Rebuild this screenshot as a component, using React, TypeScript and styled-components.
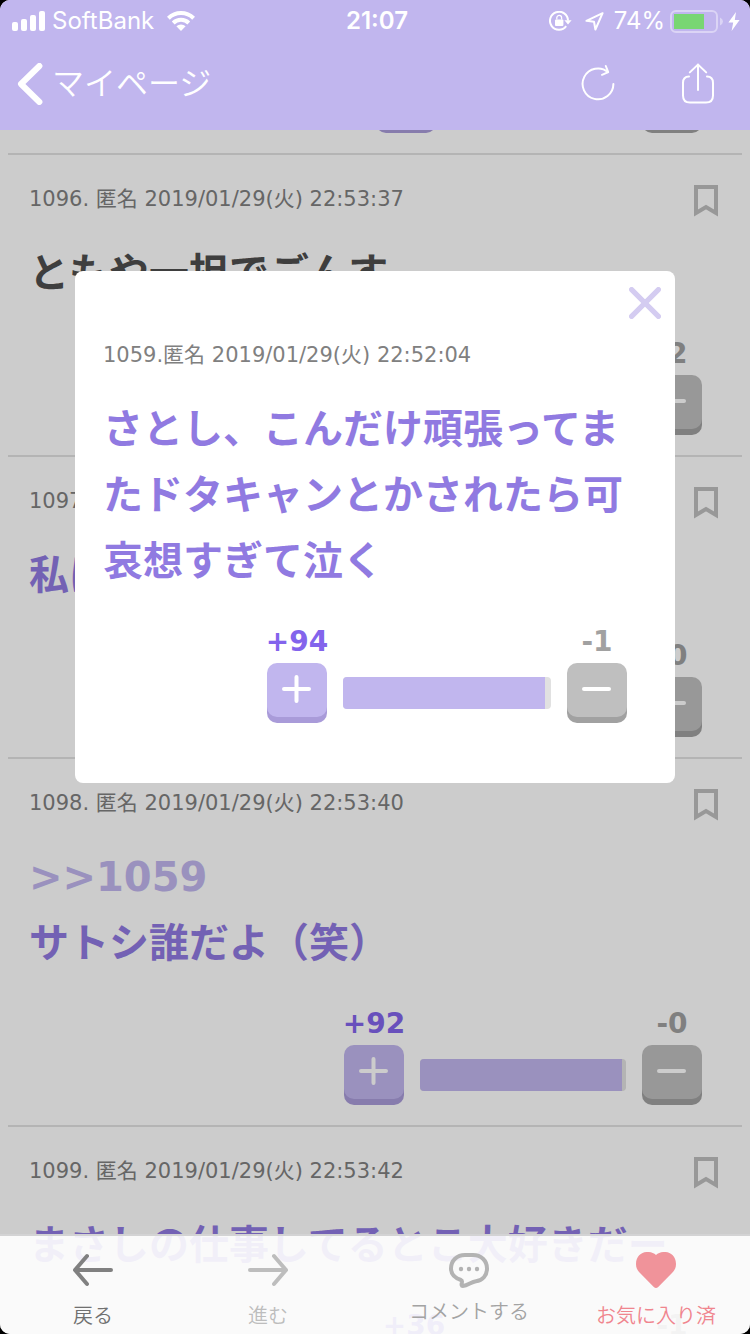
import React from "react";
import styled, { createGlobalStyle } from "styled-components";

const Global = createGlobalStyle`
  *, *::before, *::after { box-sizing: border-box; }
  html, body { margin: 0; background: #000; }
  body { font-family: "DejaVu Sans", "Noto Sans CJK JP", sans-serif; }
  button { font: inherit; color: inherit; border: 0; padding: 0; background: none; cursor: pointer; }
  h1, p, ul { margin: 0; padding: 0; }
  svg { display: block; flex: none; }
`;

const Shell = styled.div`
  display: flex;
  flex-direction: column;
  height: 100vh;
  border-radius: 10px;
  overflow: hidden;
  position: relative;
  background: #fff;
`;

const Header = styled.header`
  flex: none;
  background: #c1b6ee;
  color: #fff;
`;

const StatusBar = styled.div`
  display: grid;
  grid-template-columns: 1fr auto 1fr;
  align-items: center;
  height: 40px;
  padding: 2px 8px 0 12px;
  font-family: Inter, sans-serif;
  font-size: 24px;
  line-height: 28px;
`;

const StatusGroup = styled.div<{ $end?: boolean }>`
  display: flex;
  align-items: center;
  justify-content: ${(p) => (p.$end ? "flex-end" : "flex-start")};
  gap: ${(p) => (p.$end ? 5 : 7)}px;
  padding-right: 2px;
`;

const IconPair = styled.span`
  display: flex;
  align-items: center;
  gap: 13px;
  padding-right: 5px;
`;

const Carrier = styled.span`
  padding-right: 6px;
`;

const Clock = styled.time`
  font-weight: 600;
`;

const NavBar = styled.nav`
  display: flex;
  align-items: center;
  justify-content: space-between;
  height: 90px;
  padding: 0 34px 2px 16px;
`;

const BackLink = styled.a`
  display: flex;
  align-items: center;
  gap: 8px;
  color: #fff;
  text-decoration: none;
  font-family: "Noto Sans CJK JP", sans-serif;
  font-weight: 350;
  font-size: 32px;
  line-height: 40px;
`;

const BackLabel = styled.span`
  padding-bottom: 6px;
`;

const NavActions = styled.div`
  display: flex;
  gap: 64px;
`;

const Main = styled.main`
  flex: 1;
  min-height: 0;
  position: relative;
  overflow: hidden;
`;

const PostList = styled.ul`
  list-style: none;
  padding: 0 8px;
`;

const ScrolledPost = styled.li`
  display: flex;
  align-items: flex-end;
  justify-content: flex-end;
  height: 23px;
  padding: 0 40px 20px 0;
  overflow: hidden;
`;

const Post = styled.li`
  border-top: 2px solid #e1e1e1;
  padding: 30px 40px 20px 21px;
`;

const PostHead = styled.div`
  display: flex;
  justify-content: space-between;
  height: 28px;
  margin-right: -16px;
`;

const Meta = styled.p`
  font-size: 21px;
  line-height: 28px;
  color: #808080;
  white-space: nowrap;
`;

const Body = styled.p<{ $tone: "plain" | "popular" }>`
  margin-top: 27px;
  font-size: 40px;
  line-height: 66px;
  font-weight: 700;
  color: ${(p) => (p.$tone === "plain" ? "#4e4e4e" : "#907ae1")};
`;

const Anchor = styled.a`
  display: block;
  color: #c1b6ee;
  text-decoration: none;
`;

const VoteRow = styled.div`
  display: flex;
  justify-content: flex-end;
  align-items: flex-end;
  gap: 16px;
  margin-top: 34px;
`;

const VoteCell = styled.div`
  display: flex;
  flex-direction: column;
  align-items: center;
  width: 60px;
`;

const Count = styled.span<{ $kind: "plus" | "minus" }>`
  margin-bottom: 7px;
  font-size: 28px;
  line-height: 28px;
  font-weight: 700;
  white-space: nowrap;
  color: ${(p) => (p.$kind === "plus" ? "#8364ec" : "#a1a1a1")};
`;

const VoteButton = styled.button<{ $kind: "plus" | "minus" }>`
  display: flex;
  align-items: center;
  justify-content: center;
  width: 60px;
  height: 54px;
  margin-bottom: 6px;
  border-radius: 10px;
  background: ${(p) => (p.$kind === "plus" ? "#c1b6ee" : "#bfbfbf")};
  box-shadow: 0 6px ${(p) => (p.$kind === "plus" ? "#a99bd9" : "#a1a1a1")};
`;

const Track = styled.div<{ $width: number }>`
  width: ${(p) => p.$width}px;
  height: 32px;
  margin-bottom: 14px;
  border-radius: 4px;
  overflow: hidden;
  background: #e1e1e1;
`;

const Fill = styled.div<{ $rest: number }>`
  height: 100%;
  margin-right: ${(p) => p.$rest}px;
  background: #c1b6ee;
`;

const Overlay = styled.div`
  position: absolute;
  inset: 0;
  display: flex;
  justify-content: center;
  align-items: flex-start;
  padding-top: 141px;
  background: rgba(0, 0, 0, 0.2);
`;

const Dialog = styled.section`
  width: 80%;
  background: #fff;
  border-radius: 8px;
`;

const DialogTop = styled.div`
  display: flex;
  justify-content: flex-end;
  padding: 16px 14px 0;
`;

const DialogContent = styled.div`
  padding: 22px 48px 60px 28px;
`;

const TabBar = styled.nav`
  position: absolute;
  left: 0;
  right: 0;
  bottom: 0;
  display: grid;
  grid-template-columns: 186fr 164fr 238fr 136fr;
  height: 100px;
  padding: 16px 26px 0 0;
  border-top: 2px solid #d3d3d4;
  background: rgba(255, 255, 255, 0.9);
`;

const Tab = styled.button<{ $color: string; $gap?: number }>`
  display: flex;
  flex-direction: column;
  align-items: center;
  justify-content: flex-start;
  gap: ${(p) => p.$gap ?? 15}px;
  font-family: "Noto Sans CJK JP", sans-serif;
  font-weight: 350;
  font-size: 20px;
  line-height: 24px;
  white-space: nowrap;
  color: ${(p) => p.$color};
`;

const SignalIcon = () => (
  <svg width="33" height="20" viewBox="0 0 33 20" fill="#fff" aria-hidden="true">
    <rect x="0" y="11" width="6" height="9" rx="2" />
    <rect x="9" y="8" width="6" height="12" rx="2" />
    <rect x="18" y="4" width="6" height="16" rx="2" />
    <rect x="27" y="0" width="6" height="20" rx="2" />
  </svg>
);

const WifiIcon = () => (
  <svg width="28" height="20" viewBox="0 0 28 20" aria-hidden="true">
    <g fill="none" stroke="#fff" strokeWidth="4">
      <path d="M1.4 7.2a18 18 0 0 1 25.2 0" />
      <path d="M6.2 12a11.2 11.2 0 0 1 15.6 0" />
    </g>
    <path d="M14 20l-4.6-4.7a6.6 6.6 0 0 1 9.2 0z" fill="#fff" />
  </svg>
);

const LockIcon = () => (
  <svg width="23" height="20" viewBox="0 0 23 20" aria-hidden="true">
    <path d="M17.2 15.2A9 9 0 1 1 19 9.6" fill="none" stroke="#fff" strokeWidth="2" />
    <path d="M15.4 9.2h7.2L19 13.4z" fill="#fff" />
    <rect x="6" y="8.4" width="8.4" height="6.6" rx="1" fill="#fff" />
    <path d="M7.8 8.6V6.8a2.4 2.4 0 0 1 4.8 0v1.8" fill="none" stroke="#fff" strokeWidth="1.3" />
  </svg>
);

const LocationIcon = () => (
  <svg width="19" height="19" viewBox="0 0 19 19" aria-hidden="true">
    <path d="M17.6 1.2L1.4 8.8l7.6.9 1.4 7.8z" fill="none" stroke="#fff" strokeWidth="2" strokeLinejoin="round" />
  </svg>
);

const BatteryIcon = () => (
  <svg width="53" height="23" viewBox="0 0 53 23" aria-hidden="true">
    <rect x="1" y="1" width="46" height="21" rx="5" fill="none" stroke="#fff" strokeOpacity=".42" strokeWidth="2" />
    <rect x="4" y="4" width="30" height="15" fill="#79d673" />
    <path d="M50 7.5q3 1.6 3 4t-3 4z" fill="#fff" fillOpacity=".42" />
  </svg>
);

const BoltIcon = () => (
  <svg width="12" height="19" viewBox="0 0 12 19" aria-hidden="true">
    <path d="M8 0L.4 10.6h4.8L3.6 19 11.6 8H6.8z" fill="#fff" />
  </svg>
);

const ChevronIcon = () => (
  <svg width="28" height="42" viewBox="0 0 28 42" aria-hidden="true">
    <path d="M23.4 3L5 21l18.4 18" fill="none" stroke="#fff" strokeWidth="6" strokeLinecap="round" strokeLinejoin="round" />
  </svg>
);

const ReloadIcon = () => (
  <svg width="36" height="42" viewBox="0 0 36 42" aria-hidden="true">
    <g fill="none" stroke="#fff" strokeWidth="2" strokeLinecap="round" strokeLinejoin="round">
      <path d="M33.4 21A15.4 15.4 0 1 1 28 9.2" />
      <path d="M25.8 3l2.4 6.2-6.2 2.6" />
    </g>
  </svg>
);

const ShareIcon = () => (
  <svg width="36" height="42" viewBox="0 0 36 42" aria-hidden="true">
    <g fill="none" stroke="#fff" strokeWidth="2" strokeLinecap="round">
      <path d="M9 13.5Q3 13.5 3 20v12.5q0 7 7 7h16q7 0 7-7V20q0-6.5-6-6.5" />
      <path d="M18 1.6V27M9.8 9.4L18 1.6l8.2 7.8" />
    </g>
  </svg>
);

const BookmarkIcon = () => (
  <svg width="24" height="32" viewBox="0 0 24 32" aria-hidden="true">
    <path d="M2 2h20v26l-10-6-10 6z" fill="none" stroke="#bfbfbf" strokeWidth="4" />
  </svg>
);

const SignIcon = ({ plus }: { plus?: boolean }) => (
  <svg width="30" height="30" viewBox="0 0 30 30" aria-hidden="true">
    <path d={plus ? "M2 14h25M14.5 2v24" : "M2 14h25"} stroke="#fff" strokeWidth="4" strokeLinecap="round" />
  </svg>
);

const CloseIcon = () => (
  <svg width="32" height="32" viewBox="0 0 32 32" aria-hidden="true">
    <path d="M2.6 2.6l26.8 26.8M29.4 2.6L2.6 29.4" stroke="#d4ccf1" strokeWidth="5.2" strokeLinecap="round" />
  </svg>
);

const ArrowIcon = ({ forward }: { forward?: boolean }) => (
  <svg width="40" height="36" viewBox="0 0 40 36" aria-hidden="true">
    <path
      d={forward ? "M2 18h36M26 4l12 14-12 14" : "M38 18H2M14 4L2 18l12 14"}
      fill="none"
      stroke={forward ? "#bdbdbd" : "#808080"}
      strokeWidth="4"
      strokeLinecap="round"
      strokeLinejoin="round"
    />
  </svg>
);

const CommentIcon = () => (
  <svg width="40" height="36" viewBox="0 0 40 36" aria-hidden="true">
    <path
      d="M16 3h8c8 0 14 5.6 14 13.5 0 7-4.5 12-11 12.700-5 .6-8 4.600-13.200 4.800-1.400 0-1.400-1.600-1-3 .3-1.400.6-2.400-.8-3C6 26 2 22.500 2 16.500 2 8.600 8 3 16 3z"
      fill="none"
      stroke="#b3b3b3"
      strokeWidth="4"
      strokeLinejoin="round"
    />
    <g fill="#b3b3b3">
      <circle cx="12" cy="17" r="2.2" />
      <circle cx="20" cy="17" r="2.2" />
      <circle cx="28" cy="17" r="2.2" />
    </g>
  </svg>
);

const HeartIcon = () => (
  <svg width="40" height="36" viewBox="0 0 40 36" aria-hidden="true">
    <path d="M20 3C14-2.600 0-1 0 12c0 4 1.500 6.500 4 9l13.800 14q2.200 2 4.400 0L36 21c2.500-2.500 4-5 4-9C40-1 26-2.600 20 3z" fill="#f0939a" />
  </svg>
);

type VoteData = { plus?: string; minus?: string; bar: number; rest: number };

const Votes = ({ plus, minus, bar, rest }: VoteData) => (
  <VoteRow>
    <VoteCell>
      {plus && <Count $kind="plus">{plus}</Count>}
      <VoteButton $kind="plus" type="button" aria-label="プラス">
        <SignIcon plus />
      </VoteButton>
    </VoteCell>
    <Track $width={bar}>
      <Fill $rest={rest} />
    </Track>
    <VoteCell>
      {minus && <Count $kind="minus">{minus}</Count>}
      <VoteButton $kind="minus" type="button" aria-label="マイナス">
        <SignIcon />
      </VoteButton>
    </VoteCell>
  </VoteRow>
);

type PostData = {
  meta: string;
  text: string;
  tone: "plain" | "popular";
  reply?: string;
  votes: VoteData;
};

const posts: PostData[] = [
  {
    meta: "1096. 匿名 2019/01/29(火) 22:53:37",
    text: "ともや一担でごんす",
    tone: "plain",
    votes: { minus: "-2", bar: 206, rest: 8 },
  },
  {
    meta: "1097. 匿名",
    text: "私は",
    tone: "popular",
    votes: { minus: "-0", bar: 206, rest: 4 },
  },
  {
    meta: "1098. 匿名 2019/01/29(火) 22:53:40",
    text: "サトシ誰だよ（笑）",
    tone: "popular",
    reply: ">>1059",
    votes: { plus: "+92", minus: "-0", bar: 206, rest: 4 },
  },
  {
    meta: "1099. 匿名 2019/01/29(火) 22:53:42",
    text: "まさしの仕事してるとこ大好きだー",
    tone: "popular",
    votes: { plus: "+36", minus: "-1", bar: 166, rest: 6 },
  },
];

export default function App() {
  return (
    <>
      <Global />
      <Shell>
        <Header>
          <StatusBar>
            <StatusGroup>
              <SignalIcon />
              <Carrier>SoftBank</Carrier>
              <WifiIcon />
            </StatusGroup>
            <Clock>21:07</Clock>
            <StatusGroup $end>
              <IconPair>
                <LockIcon />
                <LocationIcon />
              </IconPair>
              <span>74%</span>
              <BatteryIcon />
              <BoltIcon />
            </StatusGroup>
          </StatusBar>
          <NavBar>
            <BackLink href="#mypage">
              <ChevronIcon />
              <BackLabel>マイページ</BackLabel>
            </BackLink>
            <NavActions>
              <button type="button" aria-label="再読み込み">
                <ReloadIcon />
              </button>
              <button type="button" aria-label="共有">
                <ShareIcon />
              </button>
            </NavActions>
          </NavBar>
        </Header>

        <Main>
          <PostList>
            <ScrolledPost>
              <Votes bar={174} rest={6} />
            </ScrolledPost>
            {posts.map((post) => (
              <Post key={post.meta}>
                <PostHead>
                  <Meta>{post.meta}</Meta>
                  <button type="button" aria-label="ブックマーク">
                    <BookmarkIcon />
                  </button>
                </PostHead>
                <Body $tone={post.tone}>
                  {post.reply && <Anchor href="#c1059">{post.reply}</Anchor>}
                  {post.text}
                </Body>
                <Votes {...post.votes} />
              </Post>
            ))}
          </PostList>

          <Overlay>
            <Dialog role="dialog" aria-label="1059">
              <DialogTop>
                <button type="button" aria-label="閉じる">
                  <CloseIcon />
                </button>
              </DialogTop>
              <DialogContent>
                <Meta>1059.匿名 2019/01/29(火) 22:52:04</Meta>
                <Body $tone="popular">さとし、こんだけ頑張ってまたドタキャンとかされたら可哀想すぎて泣く</Body>
                <Votes plus="+94" minus="-1" bar={208} rest={6} />
              </DialogContent>
            </Dialog>
          </Overlay>
        </Main>

        <TabBar>
          <Tab type="button" $color="#707070">
            <ArrowIcon />
            戻る
          </Tab>
          <Tab type="button" $color="#bdbdbd">
            <ArrowIcon forward />
            進む
          </Tab>
          <Tab type="button" $color="#a3a3a3" $gap={11}>
            <CommentIcon />
            コメントする
          </Tab>
          <Tab type="button" $color="#f0858e">
            <HeartIcon />
            お気に入り済
          </Tab>
        </TabBar>
      </Shell>
    </>
  );
}
